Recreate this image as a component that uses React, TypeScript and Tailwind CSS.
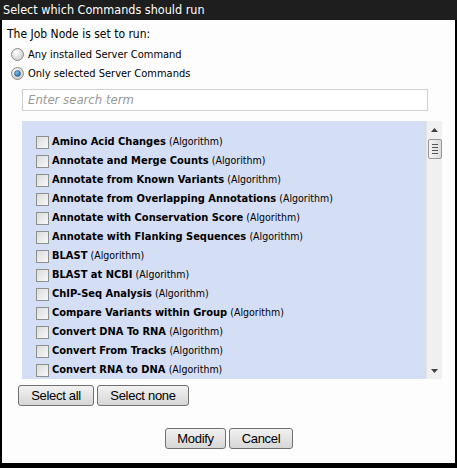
import React from 'react';

const commands = [
  'Amino Acid Changes',
  'Annotate and Merge Counts',
  'Annotate from Known Variants',
  'Annotate from Overlapping Annotations',
  'Annotate with Conservation Score',
  'Annotate with Flanking Sequences',
  'BLAST',
  'BLAST at NCBI',
  'ChIP-Seq Analysis',
  'Compare Variants within Group',
  'Convert DNA To RNA',
  'Convert From Tracks',
  'Convert RNA to DNA',
];

const uiFont = { fontFamily: '"DejaVu Sans Condensed", "DejaVu Sans", sans-serif' };
const btnFont = { fontFamily: '"Liberation Sans", Arial, sans-serif' };

function Radio({ checked }: { checked?: boolean }) {
  return (
    <svg width="13" height="13" viewBox="0 0 13 13" className="shrink-0">
      <defs>
        <radialGradient id={checked ? 'rg1' : 'rg0'} cx="0.4" cy="0.35" r="0.7">
          <stop offset="0" stopColor="#ffffff" />
          <stop offset="1" stopColor="#c9c9c9" />
        </radialGradient>
        <radialGradient id="dot" cx="0.4" cy="0.35" r="0.7">
          <stop offset="0" stopColor="#7fc3f0" />
          <stop offset="1" stopColor="#1c5f9e" />
        </radialGradient>
      </defs>
      <circle cx="6.5" cy="6.5" r="6" fill={`url(#${checked ? 'rg1' : 'rg0'})`} stroke="#8c8c8c" strokeWidth="1" />
      {checked && <circle cx="6.5" cy="6.5" r="3" fill="url(#dot)" stroke="#2d5d8a" strokeWidth="0.6" />}
    </svg>
  );
}

function Checkbox() {
  return (
    <div className="w-[13px] h-[13px] shrink-0 border border-[#8e8f8f] bg-gradient-to-br from-[#dcdcdc] to-[#f8f8f8]" />
  );
}

function Button({ label, width }: { label: string; width: string }) {
  return (
    <button
      className={`${width} h-[21px] rounded-[3px] border border-[#707070] bg-gradient-to-b from-[#f2f2f2] to-[#d6d6d6] text-[13px] tracking-[-0.3px] text-black leading-none`}
      style={btnFont}
    >
      {label}
    </button>
  );
}

function Scrollbar() {
  return (
    <div className="w-[16px] shrink-0 flex flex-col items-center bg-[#f0f0f0] border-l border-[#e3e3e3]">
      <div className="h-[17px] flex items-center justify-center">
        <svg width="7" height="4" viewBox="0 0 7 4">
          <path d="M3.5 0 L7 4 L0 4 Z" fill="#404040" />
        </svg>
      </div>
      <div className="w-[14px] h-[20px] mt-[1px] rounded-[2px] border border-[#979797] bg-gradient-to-r from-[#f4f4f4] to-[#dcdcdc] flex flex-col items-center justify-center gap-[2px]">
        <div className="w-[6px] h-[1px] bg-[#555]" />
        <div className="w-[6px] h-[1px] bg-[#555]" />
        <div className="w-[6px] h-[1px] bg-[#555]" />
        <div className="w-[6px] h-[1px] bg-[#555]" />
      </div>
      <div className="flex-1" />
      <div className="h-[17px] flex items-center justify-center">
        <svg width="7" height="4" viewBox="0 0 7 4">
          <path d="M0 0 L7 0 L3.5 4 Z" fill="#404040" />
        </svg>
      </div>
    </div>
  );
}

export default function App() {
  return (
    <div className="w-[457px] h-[468px] bg-black flex flex-col" style={uiFont}>
      <div className="h-[20px] shrink-0 bg-[#1e1e1e] text-white text-[12.5px] leading-[20px] pl-[3px]">
        Select which Commands should run
      </div>
      <div className="flex-1 mx-[2px] mb-[5px] bg-[#fdfdfd] flex flex-col text-[12px] text-black">
        <div className="pl-[5px] pt-[7px] leading-[14px]">The Job Node is set to run:</div>
        <div className="mt-[7px] pl-[9px] flex flex-col gap-[6px] text-[11px]">
          <label className="flex items-center gap-[4px] leading-[13px]">
            <Radio />
            <span>Any installed Server Command</span>
          </label>
          <label className="flex items-center gap-[4px] leading-[13px]">
            <Radio checked />
            <span>Only selected Server Commands</span>
          </label>
        </div>
        <div className="mt-[9px] ml-[20px] w-[406px] h-[22px] border border-[#cfcfcf] bg-white flex items-center px-[5px]">
          <span className="italic text-[#999] text-[13px]">Enter search term</span>
        </div>
        <div className="mt-[10px] ml-[20px] w-[420px] h-[258px] flex overflow-hidden">
          <div className="flex-1 bg-[#d4def5] pt-[12px] pl-[14px] flex flex-col overflow-hidden">
            {commands.map((c) => (
              <div key={c} className="h-[19px] shrink-0 flex items-center gap-[3px] text-[11px]">
                <Checkbox />
                <span>
                  <b className="font-bold">{c}</b> <span className="text-[10.5px]">(Algorithm)</span>
                </span>
              </div>
            ))}
          </div>
          <Scrollbar />
        </div>
        <div className="mt-[6px] ml-[16px] flex gap-[3px]">
          <Button label="Select all" width="w-[76px]" />
          <Button label="Select none" width="w-[92px]" />
        </div>
        <div className="mt-[22px] ml-[163px] flex gap-[3px]">
          <Button label="Modify" width="w-[61px]" />
          <Button label="Cancel" width="w-[64px]" />
        </div>
      </div>
    </div>
  );
}
